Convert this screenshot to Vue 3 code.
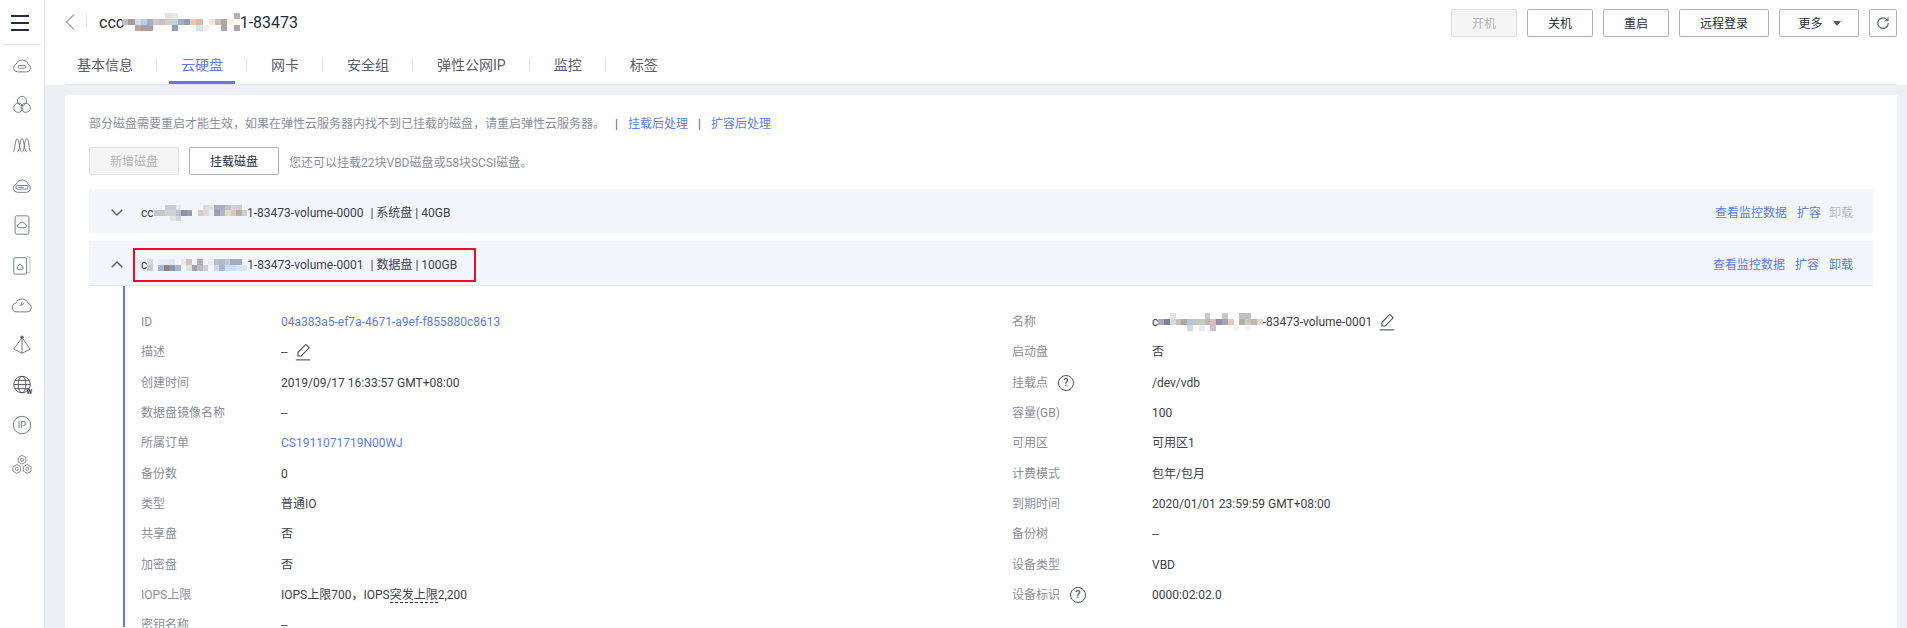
<script setup>
const tabs = ['基本信息', '云硬盘', '网卡', '安全组', '弹性公网IP', '监控', '标签']
const headBtns = [
  { t: '开机', w: 66, off: true },
  { t: '关机', w: 66 },
  { t: '重启', w: 66 },
  { t: '远程登录', w: 90 }
]
const titleMosaic = {
  size: 6.2,
  rows: [
    '-,-,-,-,-,-,-,dfe4e4,eee8e0,-,-,-,-,-,-,-,-,-,b4b4b4'.split(','),
    'bcc0c8,a89c9a,d2dde8,b9cde2,a2b2c2,d2c6ce,cabec2,d2cebb,bad2e2,aaaaba,8e9eb6,e8c8b2,dcb8a8,-,f0e4d8,c8c0b8,aaaaaa,fff0e0,-'.split(','),
    '-,-,c0a49c,a8a0a0,a8a0a8,-,-,-,8e9eb8,-,-,-,d8e4ec,f0f0e8,-,-,a8a8a8,-,a8a8a8'.split(',')
  ]
}
const disk0Mosaic = {
  size: 5.5,
  rows: [
    '-,-,c8cce0,c8cce0,e6eaee,-,-,-,-,e0dcdc,e8e0e0,a8acc8,a8acc8,c0c0d0,d8d0cc,d0ccd0,-'.split(','),
    'c4c4c4,c8c8c8,d0d0d0,d0d0d0,b8c0cc,8c94a8,9c98b0,-,d8ccd0,e0d8d8,e0f0f8,a898b8,b0b8b8,e0d8c8,d8c8b8,b8b0a8,d0d0c0'.split(','),
    '-,-,-,e0e4e8,d0d4dc,-,-,-,-,-,-,-,-,-,-,-,-'.split(',')
  ]
}
const disk1Mosaic = {
  size: 5.55,
  rows: [
    'd8d8e0,-,e8ecf8,e8ecf8,e0e8f4,-,e8e8e4,c8c8c0,-,a8b4bc,-,e8ecf4,b8c0d0,b0bcc8,c0c8d0,a0acc0,a0acc0,-'.split(','),
    'c8c8d0,-,a8b4c8,8c8484,8c9ab0,a8b4c8,-,e0e0e0,9ca0b4,c0b8bc,d0d0d0,-,d0d8ec,a8b8d0,c8e0f8,c8e0f8,d8e4f4,d8e4f4'.split(',')
  ]
}
const nameMosaic = {
  size: 5.8,
  rows: [
    '-,-,d8e4e8,-,-,-,-,-,c8c8cc,-,-,c8c8cc,-,-,c0c0c0,c0c0c0,-,-'.split(','),
    'a8a8c0,808098,d0dce0,c8c0b8,b0a89c,b8c4d0,b8c8cc,c8ccc0,c0b8a8,d8b8c8,988ca8,a8a0c0,e8c8b0,-,b0b0b0,c8c8c0,c0b8b0,d8d8d8'.split(','),
    '-,-,-,-,-,d0d8e0,-,e4eef4,-,c8c4c4,-,-,-,ecf4fa,-,f4f4fa,-,-'.split(',')
  ]
}
const leftRows = [
  { k: '描述', v: '--', edit: true },
  { k: '创建时间', v: '2019/09/17 16:33:57 GMT+08:00' },
  { k: '数据盘镜像名称', v: '--' },
  { k: '所属订单', v: 'CS1911071719N00WJ', link: true },
  { k: '备份数', v: '0' },
  { k: '类型', v: '普通IO' },
  { k: '共享盘', v: '否' },
  { k: '加密盘', v: '否' }
]
const rightRows = [
  { k: '启动盘', v: '否' },
  { k: '挂载点', v: '/dev/vdb', help: true },
  { k: '容量(GB)', v: '100' },
  { k: '可用区', v: '可用区1' },
  { k: '计费模式', v: '包年/包月' },
  { k: '到期时间', v: '2020/01/01 23:59:59 GMT+08:00' },
  { k: '备份树', v: '--' },
  { k: '设备类型', v: 'VBD' },
  { k: '设备标识', v: '0000:02:02.0', help: true }
]
const cellStyle = (c, size) => ({ width: size + 'px', height: size + 'px', background: c === '-' ? 'transparent' : '#' + c })
</script>

<template>
  <div class="page">
    <aside class="side">
      <div class="burger"><i></i><i></i><i></i></div>
      <div class="side-line"></div>
      <div class="side-icons">
        <svg viewBox="0 0 24 24" class="si"><path d="M7 19.500h10a4.300 4.300 0 0 0 1.800-8.200A7 7 0 0 0 5.700 11 4.400 4.400 0 0 0 7 19.500Z"/><rect x="8" y="12.500" width="8" height="3" rx="1"/></svg>
        <svg viewBox="0 0 24 24" class="si"><circle cx="12" cy="7.500" r="5"/><circle cx="8" cy="15" r="5"/><circle cx="16" cy="15" r="5"/></svg>
        <svg viewBox="0 0 24 24" class="si"><path d="M2 19.500C4.500 19.500 4.500 5 6.800 5S9.500 19.500 11.500 19.500"/><path d="M7 19.500C9.500 19.500 9.500 5 12 5S14.500 19.500 17 19.500"/><path d="M12.500 19.500C14.500 19.500 14.500 5 17.200 5S19.500 19.500 22 19.500"/></svg>
        <svg viewBox="0 0 24 24" class="si"><path d="M7 20h10a4.500 4.500 0 0 0 1.700-8.500A6.800 6.800 0 0 0 5.800 11 4.600 4.600 0 0 0 7 20Z"/><rect x="5.500" y="12.500" width="13" height="4" rx="1"/><path d="M8 14.500h6"/></svg>
        <svg viewBox="0 0 24 24" class="si"><rect x="4.500" y="2" width="15" height="20" rx="1.800"/><path d="M8.500 15h7a2.100 2.100 0 0 0-.5-4 3.200 3.200 0 0 0-6 0 2.100 2.100 0 0 0-.5 4Z"/></svg>
        <svg viewBox="0 0 24 24" class="si"><path d="M16.500 3h3.200a1 1 0 0 1 1 1v15.500a1 1 0 0 1-1 1h-3.200" stroke-opacity=".5"/><rect x="3" y="4" width="14" height="18" rx="1.500"/><path d="M7 16.500v-3l3-2.500 3 2.500v3Z"/></svg>
        <svg viewBox="0 0 24 24" class="si"><path d="M6.500 19.500h11a4.700 4.700 0 0 0 1.300-9.200A7.200 7.200 0 0 0 5.300 10 4.800 4.800 0 0 0 6.500 19.500Z"/><path d="M12 8.500l-1.500 4.500M11 12.500l3.500-2.500"/></svg>
        <svg viewBox="0 0 24 24" class="si"><path d="M12 4 3 16.500l9 4.500 9-4.500Z"/><path d="M12 4v17"/><circle cx="12" cy="3.500" r="1.400" class="fillc"/></svg>
        <svg viewBox="0 0 24 24" class="si dark"><circle cx="12" cy="11.500" r="9"/><ellipse cx="12" cy="11.500" rx="4.200" ry="9"/><path d="M3 11.500h18M4.300 7h15.400M4.300 16h15.400"/><text x="17" y="22" class="w">W</text></svg>
        <svg viewBox="0 0 24 24" class="si"><circle cx="12" cy="12" r="9.500"/><text x="12" y="15.500" class="ip">IP</text></svg>
        <svg viewBox="0 0 24 24" class="si hex"><path d="M12 1.500l4.200 2.400v4.800L12 11.100 7.800 8.700V3.900Z"/><path d="M6.300 11.500l4.200 2.400v4.800l-4.200 2.400-4.200-2.400v-4.800Z"/><path d="M17.700 11.500l4.200 2.400v4.800l-4.200 2.400-4.200-2.400v-4.800Z"/><circle cx="12" cy="6.300" r="1.700"/><circle cx="6.300" cy="16.300" r="1.700"/><circle cx="17.700" cy="16.300" r="1.700"/></svg>
      </div>
    </aside>

    <main class="main">
      <header class="panel">
        <div class="head">
          <svg class="back" viewBox="0 0 10 16"><path d="M9 .5 1.500 8 9 15.500"/></svg>
          <span class="head-sep"></span>
          <h1 class="title">
            <span>ccc</span>
            <span class="mosaic title-mosaic">
              <span v-for="(r, i) in titleMosaic.rows" :key="i" class="mrow">
                <span v-for="(c, j) in r" :key="j" :style="cellStyle(c, titleMosaic.size)"></span>
              </span>
            </span>
            <span>1-83473</span>
          </h1>
          <div class="head-btns">
            <button v-for="b in headBtns" :key="b.t" class="btn" :class="{ off: b.off }" :style="{ width: b.w + 'px' }">{{ b.t }}</button>
            <button class="btn more">更多<i class="caret"></i></button>
            <button class="btn refresh">
              <svg viewBox="0 0 16 16"><path d="M13 4.800A6 6 0 1 0 14 8"/><path d="M13.700 1.600v3.800H9.900"/></svg>
            </button>
          </div>
        </div>
        <nav class="tabs">
          <template v-for="(t, i) in tabs" :key="t">
            <span v-if="i" class="tab-sep"></span>
            <a class="tab" :class="{ active: i === 1, first: i === 0 }">{{ t }}</a>
          </template>
        </nav>
      </header>

      <section class="card">
        <p class="notice">
          <span>部分磁盘需要重启才能生效，如果在弹性云服务器内找不到已挂载的磁盘，请重启弹性云服务器。</span>
          <span class="nsep sep1">|</span><a class="link">挂载后处理</a>
          <span class="nsep sep2">|</span><a class="link">扩容后处理</a>
        </p>
        <div class="tools">
          <button class="btn off wide">新增磁盘</button>
          <button class="btn wide">挂载磁盘</button>
          <span class="tip">您还可以挂载22块VBD磁盘或58块SCSI磁盘。</span>
        </div>

        <div class="disk">
          <svg class="chev" viewBox="0 0 12 7"><path d="M.7.700 6 6 11.300.700"/></svg>
          <div class="disk-name">
            <span>cc</span>
            <span class="mosaic">
              <span v-for="(r, i) in disk0Mosaic.rows" :key="i" class="mrow">
                <span v-for="(c, j) in r" :key="j" :style="cellStyle(c, disk0Mosaic.size)"></span>
              </span>
            </span>
            <span>1-83473-volume-0000</span>
            <span class="meta">| 系统盘 | 40GB</span>
          </div>
          <div class="acts acts0"><a class="link">查看监控数据</a><a class="link">扩容</a><a class="muted">卸载</a></div>
        </div>

        <div class="disk open">
          <svg class="chev" viewBox="0 0 12 7"><path d="M.7 6.300 6 1l5.300 5.300"/></svg>
          <div class="disk-name boxed">
            <span>c</span>
            <span class="mosaic">
              <span v-for="(r, i) in disk1Mosaic.rows" :key="i" class="mrow">
                <span v-for="(c, j) in r" :key="j" :style="cellStyle(c, disk1Mosaic.size)"></span>
              </span>
            </span>
            <span>1-83473-volume-0001</span>
            <span class="meta">| 数据盘 | 100GB</span>
          </div>
          <div class="acts"><a class="link">查看监控数据</a><a class="link">扩容</a><a class="link">卸载</a></div>
        </div>

        <div class="detail">
          <div class="col left">
            <div class="row"><span class="k">ID</span><a class="link v">04a383a5-ef7a-4671-a9ef-f855880c8613</a></div>
            <div v-for="r in leftRows" :key="r.k" class="row">
              <span class="k">{{ r.k }}</span>
              <span class="v" :class="{ link: r.link }">{{ r.v }}</span>
              <svg v-if="r.edit" class="pen" viewBox="0 0 16 16"><path d="M3.500 11.500V8.300L10.500 1.300l3 3-7 7.200Z"/><path d="M1.500 15h13"/></svg>
            </div>
            <div class="row"><span class="k">IOPS上限</span><span class="v">IOPS上限700，IOPS<span class="dash">突发上限</span>2,200</span></div>
            <div class="row"><span class="k">密钥名称</span><span class="v">--</span></div>
          </div>
          <div class="col">
            <div class="row">
              <span class="k">名称</span>
              <span class="v vname">
                <span>c</span>
                <span class="mosaic">
                  <span v-for="(r, i) in nameMosaic.rows" :key="i" class="mrow">
                    <span v-for="(c, j) in r" :key="j" :style="cellStyle(c, nameMosaic.size)"></span>
                  </span>
                </span>
                <span>-83473-volume-0001</span>
              </span>
              <svg class="pen" viewBox="0 0 16 16"><path d="M3.500 11.500V8.300L10.500 1.300l3 3-7 7.200Z"/><path d="M1.500 15h13"/></svg>
            </div>
            <div v-for="r in rightRows" :key="r.k" class="row">
              <span class="k"><span>{{ r.k }}</span><i v-if="r.help" class="help">?</i></span>
              <span class="v">{{ r.v }}</span>
            </div>
          </div>
        </div>
      </section>
    </main>
  </div>
</template>

<style>
html, body { margin: 0; background: #fff; overflow: hidden; }
</style>

<style scoped>
.page { display: flex; width: 1907px; height: 628px; overflow: hidden; font: 12px/18px Roboto, "Noto Sans CJK SC", sans-serif; color: #3c404a; background: #fff; }
.side { width: 44px; flex: none; border-right: 1px solid #dfe1e8; background: #fff; }
.burger { display: flex; flex-direction: column; gap: 5px; padding: 15px 11px 0; height: 29px; }
.burger i { display: block; height: 2px; width: 18px; background: #252b3a; }
.side-line { height: 1px; margin: 0 3px 0 3px; background: #dfe1e8; }
.side-icons { display: flex; flex-direction: column; align-items: center; }
.si { width: 22px; height: 22px; margin: 9px 0; fill: none; stroke: #6d7285; stroke-width: 1; }
.si.dark { stroke: #4a4d5a; }
.si .fillc { fill: #4a4d5a; }
.si text { stroke: none; fill: #6d7285; font-family: Roboto, sans-serif; }
.si .w { font-size: 7px; font-weight: 700; fill: #333; }
.si .ip { font-size: 10px; text-anchor: middle; }
.si.hex { stroke-width: .9; }

.main { flex: 1; min-width: 0; background: #eeeff4; display: flex; flex-direction: column; }
.panel { background: #fff; padding-right: 10px; }
.head { display: flex; height: 46px; padding-left: 20px; }
.back { width: 10px; height: 16px; margin-top: 14px; fill: none; stroke: #575d6c; stroke-width: 1; }
.head-sep { width: 1px; height: 15px; margin: 13px 12px 0 11px; background: #dfe1e8; }
.title { display: flex; align-items: center; margin: 0; height: 46px; font-size: 16px; font-weight: 400; color: #252b3a; }
.title-mosaic { margin: 0 0 2px -2px; }
.mosaic { display: inline-flex; flex-direction: column; }
.mrow { display: flex; }
.mrow > span { flex: none; display: block; }
.head-btns { margin-left: auto; display: flex; gap: 10px; padding-top: 9px; align-items: flex-start; }
.btn { box-sizing: border-box; height: 28px; padding: 1px 0 0; background: #fff; border: 1px solid #adb0b8; border-radius: 2px; font: inherit; color: #252b3a; display: inline-flex; align-items: center; justify-content: center; }
.btn.off { background: #f5f5f6; border-color: #dfe1e6; color: #b3b3b3; }
.more { width: 80px; gap: 10px; padding-left: 1px; }
.caret { width: 0; height: 0; border: 4px solid transparent; border-top: 5px solid #575d6c; border-bottom: 0; }
.refresh { width: 28px; padding: 0; }
.refresh svg { width: 14px; height: 14px; fill: none; stroke: #575d6c; stroke-width: 1.300; }
.tabs { display: flex; align-items: center; height: 38px; margin-left: 20px; border-bottom: 1px solid #dfe1e8; font-size: 14px; color: #575d6c; }
.tab { position: relative; height: 38px; line-height: 38px; padding: 0 23px 0 24px; }
.tab.first { padding-left: 12px; }
.tab.active { color: #5e7ce0; }
.tab.active::after { content: ""; position: absolute; left: 12px; right: 11px; bottom: 0; height: 3px; background: #5e7ce0; }
.tab-sep { width: 1px; height: 14px; background: #dfe1e8; }

.card { margin: 10px 10px 0 20px; flex: 1; min-height: 0; background: #fff; padding: 20px 24px 0; }
.notice { margin: 0; display: flex; color: #8a8e99; height: 18px; }
.nsep { color: #575d6c; }
.sep1 { margin: 0 10px 0 10px; }
.sep2 { margin: 0 10px; }
.link { color: #5e7ce0; }
.muted { color: #bbb; }
.tools { display: flex; align-items: center; gap: 10px; margin-top: 14px; }
.wide { width: 90px; }
.tip { color: #8a8e99; padding-top: 4px; }
.disk { box-sizing: border-box; display: flex; align-items: center; height: 44px; margin-top: 14px; padding: 4px 20px 0 22px; background: #f2f5fc; }
.disk.open { margin-top: 8px; box-sizing: content-box; padding-top: 4px; height: 40px; border-bottom: 1px solid #e3e5ec; }
.chev { width: 12px; height: 7px; flex: none; margin-top: -2px; fill: none; stroke: #575d6c; stroke-width: 1.400; }
.disk-name { display: flex; align-items: center; margin-left: 18px; color: #3c404a; }
.disk-name.boxed { position: relative; }
.disk-name.boxed::after { content: ""; position: absolute; left: -8px; top: -8px; width: 343px; height: 34px; box-sizing: border-box; border: 2px solid #e81123; pointer-events: none; }
.meta { margin-left: 7px; white-space: pre; }
.acts { margin-left: auto; display: flex; gap: 10px; }
.acts0 a:last-child { margin-left: -2px; }
.detail { display: flex; margin-left: 34px; border-left: 2px solid #5e7ce0; padding: 21px 0 0 16px; height: 320px; }
.col.left { width: 871px; flex: none; }
.row { display: flex; align-items: center; height: 30.3px; }
.k { width: 140px; flex: none; color: #8a8e99; display: flex; align-items: center; }
.help { box-sizing: border-box; width: 16px; height: 16px; border: 1px solid #4d5260; border-radius: 50%; margin-left: 10px; font-style: normal; font-size: 11px; font-weight: 500; line-height: 14px; text-align: center; color: #4d5260; }
.pen { width: 18px; height: 18px; margin-left: 6px; fill: none; stroke: #4d5260; stroke-width: 1; }
.vname { display: flex; align-items: center; }
.dash { border-bottom: 1px dashed #333; }
</style>
